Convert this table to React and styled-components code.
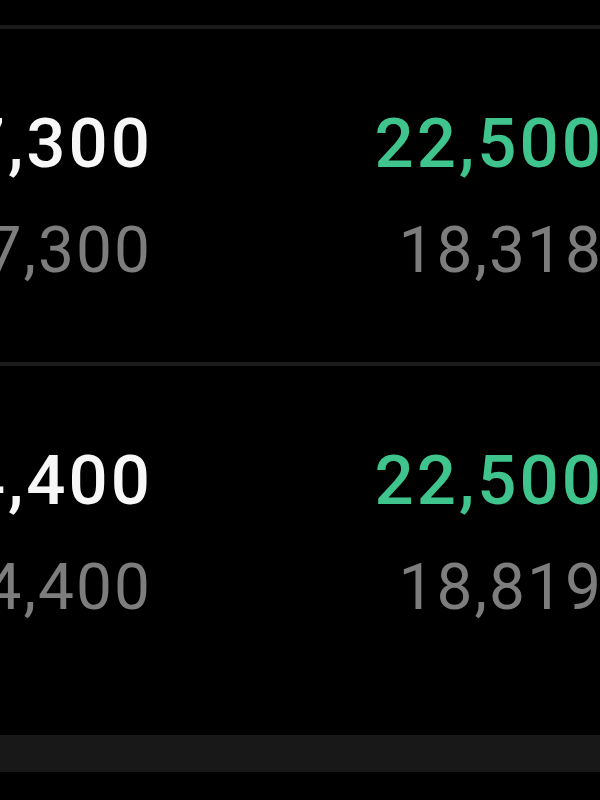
import React from 'react'
import styled, { createGlobalStyle } from 'styled-components'

const GlobalStyle = createGlobalStyle`
	html, body {
		margin: 0;
		padding: 0;
		background: #000;
		overflow: hidden;
	}
	body {
		font-family: Roboto, "Noto Sans", sans-serif;
	}
`

const Screen = styled.div`
	width: 600px;
	height: 800px;
	background: #000;
	padding-top: 25px;
	box-sizing: border-box;
	overflow: hidden;
`

const Divider = styled.div`
	height: 4px;
	background: #1b1b1b;
`

const Row = styled.div`
	display: grid;
	grid-template-columns: 150px 451px;
	padding: 65px 0 54px;
	width: 601px;
`

const Cell = styled.div`
	display: flex;
	flex-direction: column;
	align-items: flex-end;
	white-space: nowrap;
`

const Price = styled.div`
	font-size: 69px;
	font-weight: 500;
	line-height: 100px;
	letter-spacing: 3px;
	margin-right: -3px;
	color: ${(p) => (p.$up ? '#3ec48c' : '#f7f7f7')};
`

const Sub = styled.div`
	font-size: 64px;
	font-weight: 400;
	line-height: 114px;
	letter-spacing: 2px;
	margin-right: -2px;
	color: #7d7d7d;
`

const Band = styled.div`
	margin-top: 36px;
	height: 37px;
	background: #181818;
`

const rows = [
	{ left: '7,300', leftSub: '7,300', right: '22,500', rightSub: '18,318' },
	{ left: '4,400', leftSub: '4,400', right: '22,500', rightSub: '18,819' },
]

export default function App() {
	return (
		<>
			<GlobalStyle />
			<Screen>
				{rows.map((r, i) => (
					<React.Fragment key={i}>
						<Divider />
						<Row>
							<Cell>
								<Price>{r.left}</Price>
								<Sub>{r.leftSub}</Sub>
							</Cell>
							<Cell>
								<Price $up>{r.right}</Price>
								<Sub>{r.rightSub}</Sub>
							</Cell>
						</Row>
					</React.Fragment>
				))}
				<Band />
			</Screen>
		</>
	)
}
